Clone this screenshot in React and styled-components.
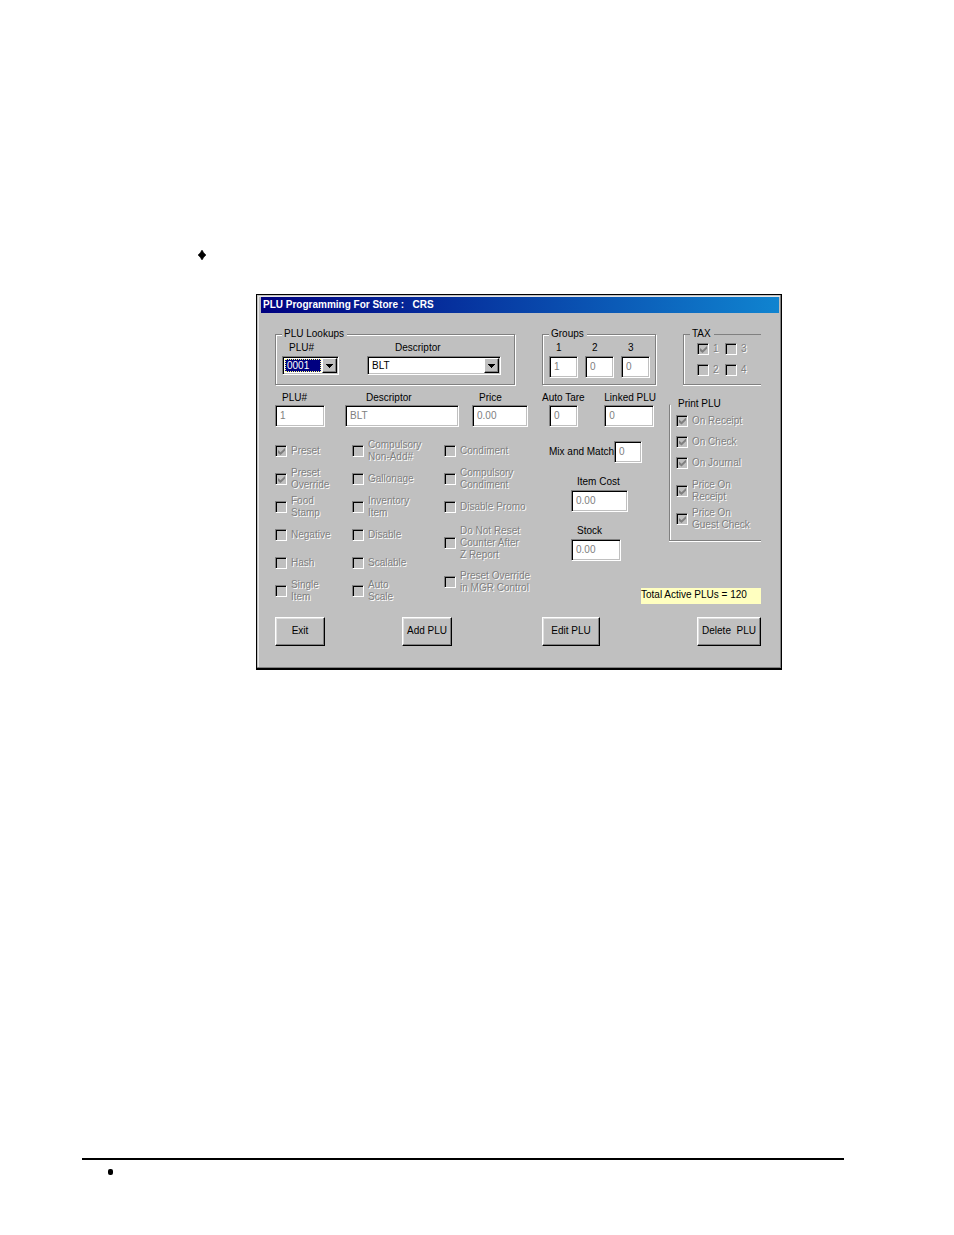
import React from 'react';
import styled, { createGlobalStyle } from 'styled-components';

const GlobalStyle = createGlobalStyle`
  * { box-sizing: border-box; }
  body {
    margin: 0;
    background: #fff;
    color: #000;
    font: 10px/12px "Liberation Sans", Arial, sans-serif;
  }
`;

const Page = styled.div`
  display: flex;
  flex-direction: column;
  min-height: 100vh;
  padding: 250px 110px 60px 82px;
`;

const Bullets = styled.ul`
  list-style: none;
  margin: 0 0 34px 116px;
  padding: 0;
`;

const BulletItem = styled.li`
  height: 10px;
  svg { display: block; }
`;

const Dialog = styled.section`
  margin: 0 62px 0 174px;
  background: #c0c0c0;
  border: 1px solid #000;
  border-bottom-width: 2px;
  box-shadow: inset -1px -1px 0 #808080, inset 1px 1px 0 #c0c0c0, inset 2px 2px 0 #e8e8e8;
`;

const TitleBar = styled.h1`
  margin: 2px 2px 0 4px;
  padding: 0 2px;
  height: 16px;
  background: linear-gradient(to right, #000080, #1084d0);
  color: #fff;
  font-size: 10px;
  line-height: 16px;
  white-space: pre;
`;

const Form = styled.form`
  display: grid;
  grid-template-columns: 254fr 114fr 92fr;
  column-gap: 13px;
  grid-template-areas:
    "lookups groups tax"
    "item counts print"
    "flags costs print"
    "flags note note"
    "left mid right";
  padding: 15px 20px 22px 18px;
`;

const GroupBox = styled.fieldset`
  grid-area: ${(p) => p.$area};
  align-self: ${(p) => (p.$topless ? 'start' : 'stretch')};
  min-width: 0;
  margin: ${(p) => p.$margin || '0'};
  padding: ${(p) => p.$padding};
  border: 1px solid #808080;
  box-shadow: 1px 1px 0 #fff, inset 1px 1px 0 #fff;
  ${(p) => p.$open && `
    border-right: 0;
    box-shadow: 0 1px 0 #fff, inset 1px 0 0 #fff;
  `}
  ${(p) => p.$topless && 'border-top-color: #c0c0c0;'}
`;

const Legend = styled.legend`
  margin-left: ${(p) => p.$shift || 0}px;
  padding: 0 3px 0 2px;
  background: #c0c0c0;
  white-space: nowrap;
`;

const Row = styled.div`
  display: flex;
  gap: ${(p) => p.$gap || 0}px;
`;

const ItemFields = styled.div`
  grid-area: item;
  display: grid;
  grid-template-columns: 70fr 127fr 57fr;
  padding-top: 7px;
`;

const CountFields = styled.div`
  grid-area: counts;
  display: flex;
  justify-content: space-between;
  padding-top: 7px;
`;

const Field = styled.div`
  display: flex;
  flex-direction: column;
  align-items: flex-start;
  gap: ${(p) => p.$gap || 2}px;
`;

const Label = styled.label`
  margin-left: ${(p) => p.$indent || 0}px;
  white-space: nowrap;
`;

const TextBox = styled.input.attrs({ type: 'text', disabled: true })`
  width: ${(p) => p.$width}px;
  height: 22px;
  margin: 0 0 0 ${(p) => p.$indent || 0}px;
  padding: 0 3px 1px 4px;
  border: 1px solid;
  border-color: #808080 #fff #fff #808080;
  border-radius: 0;
  background: #fff;
  box-shadow: inset 1px 1px 0 #000, inset -1px -1px 0 #c0c0c0;
  color: #808080;
  font: inherit;
`;

const Combo = styled.div`
  display: flex;
  width: ${(p) => p.$width}px;
  height: 19px;
  padding: 1px;
  border: 1px solid;
  border-color: #808080 #fff #fff #808080;
  background: #fff;
  box-shadow: inset 1px 1px 0 #000, inset -1px -1px 0 #c0c0c0;
`;

const Select = styled.select`
  appearance: none;
  flex: 1;
  min-width: 0;
  margin: 1px;
  padding: 0 1px;
  border: ${(p) => (p.$active ? '1px dotted #ffff7f' : '1px solid transparent')};
  border-radius: 0;
  outline: 0;
  background: ${(p) => (p.$active ? '#000080' : '#fff')};
  color: ${(p) => (p.$active ? '#fff' : '#000')};
  font: inherit;
`;

const Arrow = styled.span`
  display: flex;
  align-items: center;
  justify-content: center;
  width: 15px;
  background: #c0c0c0;
  border: 1px solid;
  border-color: #fff #000 #000 #fff;
  box-shadow: inset -1px -1px 0 #808080;
`;

const CheckRow = styled.label`
  display: flex;
  align-items: center;
  gap: 4px;
  height: ${(p) => p.$height}px;
  color: #808080;
  text-shadow: 1px 1px 0 #fff;
  white-space: pre;
`;

const CheckBox = styled.input.attrs({ type: 'checkbox', disabled: true })`
  appearance: none;
  flex: none;
  width: 12px;
  height: 12px;
  margin: 0;
  border: 1px solid;
  border-color: #808080 #fff #fff #808080;
  background: #c0c0c0;
  box-shadow: inset 1px 1px 0 #000;
  &:checked::after {
    content: "";
    display: block;
    width: 7px;
    height: 7px;
    margin: 2px 0 0 2px;
    background: #808080;
    clip-path: polygon(0 29%, 36% 62%, 100% 0, 100% 40%, 36% 100%, 0 70%);
  }
`;

const TaxGrid = styled.div`
  display: grid;
  grid-template-columns: 28px 1fr;
  row-gap: 3px;
`;

const Flags = styled.div`
  grid-area: flags;
  display: grid;
  grid-template-columns: minmax(0, 77fr) minmax(0, 92fr) minmax(0, 85fr);
  padding-top: 10px;
`;

const PriceChecks = styled.div`
  padding-top: 4px;
`;

const Costs = styled.div`
  grid-area: costs;
  display: flex;
  flex-direction: column;
  gap: 13px;
  padding: 14px 0 0 29px;
`;

const MixRow = styled.div`
  display: flex;
  align-items: center;
  justify-content: space-between;
  width: 92px;
  margin-left: -22px;
`;

const Note = styled.output`
  grid-area: note;
  align-self: end;
  justify-self: end;
  width: 120px;
  height: 16px;
  margin-bottom: 1px;
  background: #ffffc0;
  line-height: 14px;
  white-space: nowrap;
`;

const Actions = styled.div`
  grid-area: ${(p) => p.$area};
  display: flex;
  gap: 77px;
  justify-content: ${(p) => p.$align || 'flex-start'};
  padding-top: 12px;
`;

const Button = styled.button`
  width: ${(p) => p.$width}px;
  height: 29px;
  padding: 0 0 2px;
  border: 1px solid;
  border-color: #fff #000 #000 #fff;
  border-radius: 0;
  background: #c0c0c0;
  box-shadow: inset -1px -1px 0 #808080, inset 1px 1px 0 #dfdfdf;
  color: #000;
  font: inherit;
  white-space: pre;
`;

const Footer = styled.footer`
  margin-top: auto;
  padding: 9px 0 0 26px;
  border-top: 2px solid #000;
`;

const Dot = styled.div`
  width: 5px;
  height: 6px;
  border-radius: 2px;
  background: #000;
`;

const flagColumns = [
  [
    ['Preset', 28, true],
    ['Preset\nOverride', 28, true],
    ['Food\nStamp', 28],
    ['Negative', 28],
    ['Hash', 28],
    ['Single\nItem', 28],
  ],
  [
    ['Compulsory\nNon-Add#', 28],
    ['Gallonage', 28],
    ['Inventory\nItem', 28],
    ['Disable', 28],
    ['Scalable', 28],
    ['Auto\nScale', 28],
  ],
  [
    ['Condiment', 28],
    ['Compulsory\nCondiment', 28],
    ['Disable Promo', 28],
    ['Do Not Reset\nCounter After\nZ Report', 44],
    ['Preset Override\nin MGR Control', 34],
  ],
];

function Check({ text, height, checked }) {
  return (
    <CheckRow $height={height}>
      <CheckBox defaultChecked={checked} />
      <span>{text}</span>
    </CheckRow>
  );
}

function LabeledBox({ id, label, value, width, labelIndent, boxIndent, gap }) {
  return (
    <Field $gap={gap}>
      <Label htmlFor={id} $indent={labelIndent}>{label}</Label>
      <TextBox id={id} defaultValue={value} $width={width} $indent={boxIndent} />
    </Field>
  );
}

function ComboField({ id, label, value, width, indent, active }) {
  return (
    <Field>
      <Label htmlFor={id} $indent={indent}>{label}</Label>
      <Combo $width={width}>
        <Select id={id} defaultValue={value} $active={active}>
          <option>{value}</option>
        </Select>
        <Arrow aria-hidden="true">
          <svg width="7" height="4" viewBox="0 0 7 4" shapeRendering="crispEdges">
            <path d="M0 0h7v1h-1v1h-1v1h-1v1h-1v-1h-1v-1h-1v-1h-1z" />
          </svg>
        </Arrow>
      </Combo>
    </Field>
  );
}

export default function App() {
  return (
    <>
      <GlobalStyle />
      <Page>
        <Bullets>
          <BulletItem>
            <svg width="8" height="10" viewBox="0 0 8 10">
              <path d="M4 0Q5.5 3 8 5Q5.5 7 4 10Q2.5 7 0 5Q2.5 3 4 0z" stroke="#000" strokeWidth="0.5" />
            </svg>
          </BulletItem>
        </Bullets>

        <Dialog>
          <TitleBar>{'PLU Programming For Store :   CRS'}</TitleBar>
          <Form onSubmit={(e) => e.preventDefault()}>
            <GroupBox $area="lookups" $margin="0 14px 0 0" $padding="2px 6px 5px">
              <Legend>PLU Lookups</Legend>
              <Row $gap={28}>
                <ComboField id="find-plu" label="PLU#" value="0001" width={57} indent={7} active />
                <ComboField id="find-desc" label="Descriptor" value="BLT" width={134} indent={28} />
              </Row>
            </GroupBox>

            <GroupBox $area="groups" $padding="2px 6px 5px">
              <Legend>Groups</Legend>
              <Row $gap={7}>
                <LabeledBox id="group-1" label="1" value="1" width={29} labelIndent={7} />
                <LabeledBox id="group-2" label="2" value="0" width={29} labelIndent={7} />
                <LabeledBox id="group-3" label="3" value="0" width={29} labelIndent={7} />
              </Row>
            </GroupBox>

            <GroupBox $area="tax" $margin="0 0 0 14px" $padding="0 0 5px 13px" $open>
              <Legend $shift={-7}>TAX</Legend>
              <TaxGrid>
                <Check text="1" height={18} checked />
                <Check text="3" height={18} />
                <Check text="2" height={18} />
                <Check text="4" height={18} />
              </TaxGrid>
            </GroupBox>

            <ItemFields>
              <LabeledBox id="plu" label="PLU#" value="1" width={50} labelIndent={7} gap={1} />
              <LabeledBox id="desc" label="Descriptor" value="BLT" width={114} labelIndent={21} gap={1} />
              <LabeledBox id="price" label="Price" value="0.00" width={56} labelIndent={7} gap={1} />
            </ItemFields>

            <CountFields>
              <LabeledBox id="tare" label="Auto Tare" value="0" width={29} boxIndent={7} gap={1} />
              <LabeledBox id="linked" label="Linked PLU" value="0" width={50} gap={1} />
            </CountFields>

            <GroupBox $area="print" $margin="13px 0 0" $padding="0 0 7px 6px" $open $topless>
              <Legend>Print PLU</Legend>
              <Check text="On Receipt" height={21} checked />
              <Check text="On Check" height={21} checked />
              <Check text="On Journal" height={21} checked />
              <PriceChecks>
                <Check text={'Price On\nReceipt'} height={28} checked />
                <Check text={'Price On\nGuest Check'} height={28} checked />
              </PriceChecks>
            </GroupBox>

            <Flags>
              {flagColumns.map((column, i) => (
                <div key={i}>
                  {column.map(([text, height, checked]) => (
                    <Check key={text} text={text} height={height} checked={checked} />
                  ))}
                </div>
              ))}
            </Flags>

            <Costs>
              <MixRow>
                <Label htmlFor="mix">Mix and Match</Label>
                <TextBox id="mix" defaultValue="0" $width={28} />
              </MixRow>
              <LabeledBox id="cost" label="Item Cost" value="0.00" width={57} labelIndent={6} />
              <LabeledBox id="stock" label="Stock" value="0.00" width={50} labelIndent={6} />
            </Costs>

            <Note>Total Active PLUs = 120</Note>

            <Actions $area="left">
              <Button type="button" $width={50}>Exit</Button>
              <Button type="button" $width={50}>Add PLU</Button>
            </Actions>
            <Actions $area="mid">
              <Button type="button" $width={58}>Edit PLU</Button>
            </Actions>
            <Actions $area="right" $align="flex-end">
              <Button type="button" $width={64}>{'Delete  PLU'}</Button>
            </Actions>
          </Form>
        </Dialog>

        <Footer>
          <Dot />
        </Footer>
      </Page>
    </>
  );
}
